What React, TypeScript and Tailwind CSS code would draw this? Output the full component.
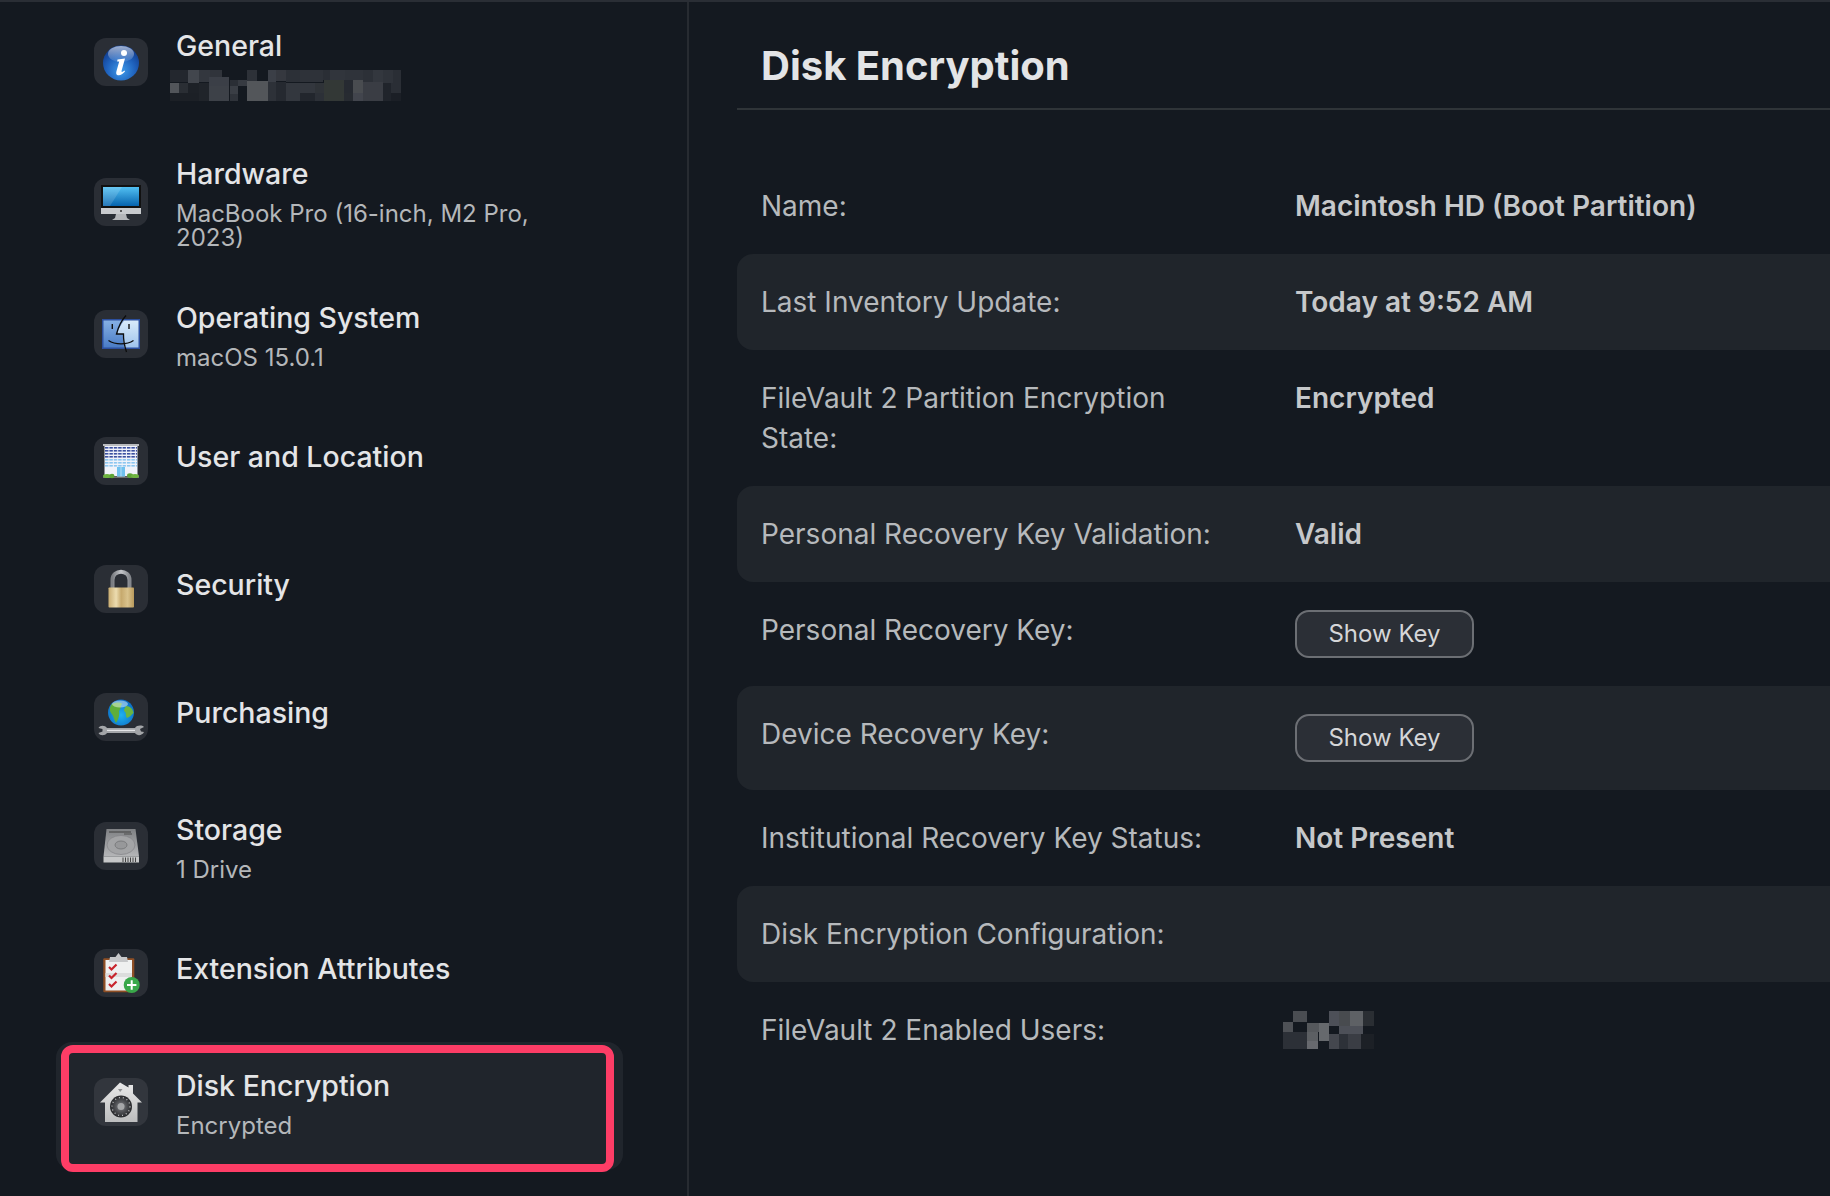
import { ReactNode } from "react";

type Cell = [number, number, number, number, string];

// pixelated redaction blocks, measured off the picture
const generalCells: Cell[] = [
  [5, 8, 18, 12, "#23272e"], [23, 8, 11, 13, "#42464d"], [34, 8, 11, 12, "#33373e"], [45, 8, 12, 7, "#30343b"],
  [44, 15, 20, 9, "#3b3f47"], [65, 18, 8, 6, "#2a2e35"], [73, 18, 9, 6, "#363a41"], [82, 8, 10, 11, "#2d3138"],
  [103, 8, 8, 12, "#3b3f47"], [111, 8, 10, 11, "#35383f"], [121, 8, 14, 12, "#2c3037"], [135, 8, 23, 12, "#2e3239"],
  [158, 8, 7, 10, "#2a2e35"], [165, 8, 15, 10, "#31353c"], [180, 8, 18, 10, "#2f333a"], [198, 8, 10, 12, "#2c3037"],
  [208, 8, 10, 12, "#33373e"], [218, 8, 10, 13, "#2f333a"], [228, 8, 8, 13, "#2a2e35"],
  [5, 21, 9, 10, "#52555a"], [14, 21, 9, 10, "#2a2e34"], [23, 21, 11, 10, "#1d2127"], [34, 21, 10, 18, "#20242a"],
  [44, 24, 20, 15, "#3d4148"], [65, 24, 8, 8, "#3a3e45"], [82, 19, 21, 20, "#53565a"], [103, 20, 8, 19, "#2d3138"],
  [111, 20, 10, 19, "#252930"], [121, 21, 29, 10, "#33373e"], [150, 21, 9, 10, "#2f3338"], [159, 18, 20, 21, "#333836"],
  [179, 18, 9, 13, "#262a31"], [188, 18, 10, 13, "#494c50"], [198, 20, 20, 19, "#3a3d44"], [218, 21, 8, 10, "#20242b"],
  [226, 21, 10, 10, "#2a2e35"], [5, 31, 29, 8, "#1c2026"], [65, 32, 8, 7, "#2f333a"], [121, 31, 14, 8, "#33373e"],
  [135, 31, 15, 8, "#22262d"], [150, 31, 9, 8, "#2c3037"], [179, 31, 9, 8, "#272b31"], [188, 31, 10, 8, "#42454d"],
  [218, 31, 8, 8, "#20242b"], [226, 31, 10, 8, "#1b1f26"],
];

const userCells: Cell[] = [
  [10, 0, 14, 11, "#4a4d52"], [0, 11, 10, 10, "#4e5156"], [24, 12, 12, 9, "#55585c"], [36, 12, 10, 18, "#66696d"],
  [0, 21, 24, 17, "#2c3037"], [24, 21, 11, 9, "#5c5f63"], [24, 30, 11, 8, "#67696e"], [46, 0, 10, 15, "#4d5058"],
  [56, 0, 11, 15, "#484b4f"], [67, 0, 13, 15, "#5e6165"], [80, 0, 11, 15, "#2a2e33"], [56, 15, 24, 8, "#4d5058"],
  [46, 23, 10, 15, "#44474e"], [56, 23, 9, 15, "#2d3138"], [65, 23, 13, 15, "#3a3d44"], [78, 23, 13, 15, "#1c2026"],
];

function Mosaic({ cells, w, h, className }: { cells: Cell[]; w: number; h: number; className: string }) {
  return (
    <svg width={w} height={h} viewBox={`0 0 ${w} ${h}`} shapeRendering="crispEdges" className={className}>
      {cells.map((c, i) => (
        <rect key={i} x={c[0]} y={c[1]} width={c[2]} height={c[3]} fill={c[4]} />
      ))}
    </svg>
  );
}

function Art({ children }: { children: ReactNode }) {
  return (
    <svg width="54" height="48" viewBox="0 0 54 48" className="block">
      {children}
    </svg>
  );
}

const InfoIcon = (
  <Art>
    <defs>
      <radialGradient id="infoBlue" cx="50%" cy="72%" r="65%">
        <stop offset="0%" stopColor="#3f9bea" />
        <stop offset="60%" stopColor="#1f62bd" />
        <stop offset="100%" stopColor="#123f91" />
      </radialGradient>
      <linearGradient id="infoGloss" x1="0" y1="0" x2="0" y2="1">
        <stop offset="0%" stopColor="#ffffff" stopOpacity="0.6" />
        <stop offset="100%" stopColor="#ffffff" stopOpacity="0.08" />
      </linearGradient>
    </defs>
    <ellipse cx="27" cy="25" rx="18" ry="17.5" fill="url(#infoBlue)" />
    <ellipse cx="27" cy="16" rx="13" ry="8" fill="url(#infoGloss)" />
    <circle cx="30" cy="15" r="3" fill="#fff" />
    <path d="M23.5 21.5 L31 20.5 L27.5 33 C27.3 34.4 28.6 34.2 30.5 32.6 L31 33.6 C28.6 36.4 26 37.8 23.8 37.2 C22 36.6 22 35 22.4 33.4 L25.2 23.6 L23.2 23.4 Z" fill="#fff" />
  </Art>
);

const MonitorIcon = (
  <Art>
    <defs>
      <linearGradient id="monScreen" x1="0" y1="0" x2="0" y2="1">
        <stop offset="0%" stopColor="#52c0f2" />
        <stop offset="100%" stopColor="#0563ae" />
      </linearGradient>
    </defs>
    <rect x="7" y="7" width="40" height="23" fill="#111" />
    <rect x="9" y="9" width="36" height="19" fill="url(#monScreen)" />
    <path d="M9 9 H28 L16 28 H9 Z" fill="#fff" opacity="0.14" />
    <rect x="7" y="30" width="40" height="6" fill="#c9cbce" />
    <circle cx="27" cy="33" r="1" fill="#333" />
    <path d="M22 36 H32 L33 40 L36 42 H18 L21 40 Z" fill="#b4b6b9" />
  </Art>
);

const FinderIcon = (
  <Art>
    <defs>
      <linearGradient id="findL" x1="0" y1="0" x2="0" y2="1">
        <stop offset="0%" stopColor="#86b0e4" />
        <stop offset="100%" stopColor="#4a7cc6" />
      </linearGradient>
      <linearGradient id="findR" x1="0" y1="0" x2="0" y2="1">
        <stop offset="0%" stopColor="#d9ebfa" />
        <stop offset="100%" stopColor="#9fc3ec" />
      </linearGradient>
    </defs>
    <rect x="8" y="9" width="38" height="30" fill="#2c4f9e" />
    <path d="M9.5 10.5 H30 C26 16 24 20 23 24 H29 C29 29 29.5 33 30 37.5 H9.5 Z" fill="url(#findL)" />
    <path d="M30 10.5 H44.5 V37.5 H30 C29.5 33 29 29 29 24 H23 C24 20 26 16 30 10.5 Z" fill="url(#findR)" />
    <path d="M32 5.5 C27 11 24 18 22.5 24 H29.5 C29.3 30 30.5 36 32.5 42" fill="none" stroke="#0c0c0c" strokeWidth="1.3" />
    <path d="M14.5 30.5 C21 35 33 35 39.5 30.5" fill="none" stroke="#0c0c0c" strokeWidth="1.3" />
    <path d="M18.3 14 V19 M35 14 V19" stroke="#111" strokeWidth="1.4" />
  </Art>
);

const BuildingIcon = (
  <Art>
    <defs>
      <pattern id="bldgWin" x="11" y="10" width="4.4" height="3" patternUnits="userSpaceOnUse">
        <rect width="3.4" height="1.6" fill="#3b50a0" />
      </pattern>
      <pattern id="bldgWin2" x="11" y="22" width="4.4" height="3" patternUnits="userSpaceOnUse">
        <rect width="3.4" height="1.6" fill="#8cc6f0" />
      </pattern>
    </defs>
    <rect x="10.5" y="9" width="33" height="30" fill="#f1f3fa" />
    <rect x="9" y="7" width="36" height="2" fill="#b9bbbe" />
    <rect x="11" y="10" width="32" height="12" fill="url(#bldgWin)" />
    <rect x="11" y="22" width="32" height="9" fill="url(#bldgWin2)" />
    <rect x="23" y="30" width="8" height="10" fill="#70c1ee" />
    <rect x="26.7" y="30" width="0.6" height="10" fill="#e8f4fb" />
    <rect x="9" y="39.5" width="36" height="1.2" fill="#8d8f8c" />
    <ellipse cx="13" cy="39" rx="4" ry="2" fill="#6db33f" />
    <ellipse cx="18" cy="39" rx="2.5" ry="2.2" fill="#5ea436" />
    <ellipse cx="36" cy="38.6" rx="3" ry="2.4" fill="#5ea436" />
    <ellipse cx="41" cy="39" rx="4" ry="2" fill="#6db33f" />
  </Art>
);

const LockIcon = (
  <Art>
    <defs>
      <linearGradient id="lockBody" x1="0" y1="0" x2="1" y2="0">
        <stop offset="0%" stopColor="#c9ad72" />
        <stop offset="30%" stopColor="#ecdcb0" />
        <stop offset="50%" stopColor="#c6a96d" />
        <stop offset="75%" stopColor="#d9c28c" />
        <stop offset="100%" stopColor="#b99a5c" />
      </linearGradient>
      <linearGradient id="lockBar" x1="0" y1="0" x2="1" y2="0">
        <stop offset="0%" stopColor="#7a7d82" />
        <stop offset="50%" stopColor="#c4c6ca" />
        <stop offset="100%" stopColor="#85888d" />
      </linearGradient>
    </defs>
    <path d="M18.5 23 V15 C18.5 4 35.5 4 35.5 15 V23" fill="none" stroke="url(#lockBar)" strokeWidth="4" />
    <rect x="14.5" y="22.5" width="25.5" height="20" rx="0.8" fill="url(#lockBody)" />
  </Art>
);

const GlobeIcon = (
  <Art>
    <defs>
      <radialGradient id="globeSea" cx="50%" cy="60%" r="60%">
        <stop offset="0%" stopColor="#1fb2f0" />
        <stop offset="100%" stopColor="#0b6cc4" />
      </radialGradient>
    </defs>
    <circle cx="27" cy="19.5" r="13" fill="url(#globeSea)" />
    <path d="M18 11 C22 9 27 9 28 11 C26 14 27 16 25 18 C26 22 24 27 22 30 C20 27 20 23 17 20 C15 17 16 13 18 11 Z" fill="#5fae3a" />
    <path d="M32 13 C36 13 39 16 39.5 20 C37 22 36 24 33 25 C31 22 33 20 30 18 C30 16 31 14 32 13 Z" fill="#6bb540" />
    <ellipse cx="26" cy="11" rx="8" ry="3.5" fill="#fff" opacity="0.45" />
    <path d="M4.5 35 C6 32 11 32 13 35 H41 C43 32 48 32 50 34 L46 36 L47 38.5 L50 39 C48 43 43 43 41 40 H13 C11 43 6 43 4.5 40 L8.5 38.5 L8.5 36 Z" fill="#a4a6a9" />
    <rect x="13" y="36.8" width="28" height="1.2" fill="#e4e5e7" />
  </Art>
);

const DiskIcon = (
  <Art>
    <defs>
      <linearGradient id="diskTop" x1="0" y1="0" x2="0" y2="1">
        <stop offset="0%" stopColor="#7f8184" />
        <stop offset="100%" stopColor="#b5b6b8" />
      </linearGradient>
    </defs>
    <path d="M12.5 7 H41.5 L45 34.5 H9.5 Z" fill="url(#diskTop)" />
    <rect x="15" y="9.5" width="22" height="1" fill="#3f3f3f" />
    <rect x="30" y="11.5" width="8" height="1" fill="#4c4c4c" />
    <ellipse cx="27" cy="23" rx="14" ry="9.5" fill="#a3a4a6" stroke="#828386" strokeWidth="0.7" />
    <ellipse cx="27" cy="23" rx="6" ry="4" fill="#97989a" stroke="#6c6d6f" strokeWidth="0.7" />
    <rect x="9.5" y="34.5" width="35.5" height="6" fill="#c6c7c8" />
    <path d="M29 35.5 V40 M31.5 35.5 V40 M34 35.5 V40 M36.5 35.5 V40 M39 35.5 V40 M41.5 35.5 V40" stroke="#444" strokeWidth="1" />
  </Art>
);

const ClipboardIcon = (
  <Art>
    <rect x="9.3" y="9.3" width="31" height="34" rx="1" fill="#8f4f25" />
    <rect x="11.5" y="11" width="26.5" height="30.5" fill="#eff0f0" />
    <rect x="11.5" y="24" width="26.5" height="4" fill="#dcdddd" />
    <path d="M24.5 4 L27.5 8 H33 L34 13 H15 L16 8 H21.5 Z" fill="#c7c8ca" />
    <path d="M15 18 L17.5 20.5 L22.5 15.5 M15 26.5 L17.5 29 L22.5 24 M15 35 L17.5 37.5 L22.5 32.5" fill="none" stroke="#c8242c" strokeWidth="2.2" />
    <circle cx="37.7" cy="36" r="8" fill="#39a84a" />
    <path d="M37.7 31.3 V40.7 M33 36 H42.4" stroke="#fff" strokeWidth="2" />
  </Art>
);

const VaultIcon = (
  <Art>
    <defs>
      <linearGradient id="vaultBody" x1="0" y1="0" x2="0" y2="1">
        <stop offset="0%" stopColor="#e9e9e9" />
        <stop offset="100%" stopColor="#bcbdbe" />
      </linearGradient>
      <radialGradient id="vaultDial" cx="50%" cy="50%" r="50%">
        <stop offset="0%" stopColor="#8e8f91" />
        <stop offset="45%" stopColor="#55565a" />
        <stop offset="100%" stopColor="#26272a" />
      </radialGradient>
    </defs>
    <path d="M34.5 9.5 V7 H39 V15.5 L48 24.5 H43.5 V44 H11 V24.5 H6 L26 4.5 Z" fill="url(#vaultBody)" />
    <path d="M24 11 H28.5 L26.2 14 Z" fill="#8f9092" />
    <circle cx="27" cy="28.5" r="11" fill="url(#vaultDial)" />
    <circle cx="27" cy="28.5" r="9" fill="none" stroke="#cfd0d2" strokeWidth="1.2" strokeDasharray="1 3" />
    <circle cx="27" cy="28.5" r="3.5" fill="#a6a7a9" />
  </Art>
);

const navItems = [
  { title: "General", blurred: true, rowClass: "h-[140px]", icon: InfoIcon },
  { title: "Hardware", sub: "MacBook Pro (16-inch, M2 Pro, 2023)", rowClass: "h-[132px]", icon: MonitorIcon },
  { title: "Operating System", sub: "macOS 15.0.1", rowClass: "h-[127px]", icon: FinderIcon },
  { title: "User and Location", rowClass: "h-[128px]", icon: BuildingIcon },
  { title: "Security", rowClass: "h-[128px]", icon: LockIcon },
  { title: "Purchasing", rowClass: "h-[129px]", icon: GlobeIcon },
  { title: "Storage", sub: "1 Drive", rowClass: "h-[127px]", icon: DiskIcon },
  { title: "Extension Attributes", rowClass: "h-[129px]", icon: ClipboardIcon },
  { title: "Disk Encryption", sub: "Encrypted", rowClass: "h-[128px]", icon: VaultIcon, selected: true },
];

function NavRow({ item }: { item: (typeof navItems)[number] }) {
  return (
    <div className={`relative w-[567px] rounded-2xl ${item.rowClass} ${item.selected ? "bg-[#20252c]" : ""}`}>
      <div className="flex h-[120px] items-center pl-[38px]">
        <div className={`h-12 w-[54px] shrink-0 rounded-[12px] ${item.selected ? "bg-[#32363d]" : "bg-[#2a2e35]"}`}>
          {item.icon}
        </div>
        <div className="ml-[28px] w-[400px]">
          <div className="text-[28.5px] leading-10 font-medium text-[#e4e5e7]">{item.title}</div>
          {item.sub && <div className="mt-2 w-[380px] text-[24px] leading-6 text-[#b4b7ba]">{item.sub}</div>}
          {item.blurred && (
            <div className="mt-2 h-6">
              <Mosaic cells={generalCells} w={245} h={40} className="-translate-x-[11px] -translate-y-3" />
            </div>
          )}
          {!item.sub && !item.blurred && <div className="h-2" />}
        </div>
      </div>
      {item.selected && (
        <div className="absolute top-[3px] right-[9px] bottom-[-2px] left-[5px] rounded-[12px] border-8 border-[#fd3d66]" />
      )}
    </div>
  );
}

function Field({ label, value, shaded, children }: { label: string; value?: string; shaded?: boolean; children?: ReactNode }) {
  return (
    <div className={`flex rounded-l-2xl px-6 py-7 text-[28px] leading-10 ${shaded ? "bg-[#20252b]" : ""}`}>
      <div className="w-[534px] shrink-0 pr-16 text-[#b6b9bc]">{label}</div>
      {value && <div className="font-semibold text-[#c6c8ca]">{value}</div>}
      {children}
    </div>
  );
}

function ShowKey() {
  return (
    <button className="h-12 w-[179px] rounded-[14px] border-2 border-[#6c6f74] bg-[#2b2f36] text-[24px] text-[#d5d6d8]">
      Show Key
    </button>
  );
}

export default function App() {
  return (
    <div className="flex h-[1196px] w-full overflow-hidden border-t-2 border-[#2a2e35] bg-[#141920] font-['Inter',sans-serif]">
      <aside className="w-[689px] shrink-0 border-r-2 border-[#272b31] pl-14">
        {navItems.map((item) => (
          <NavRow key={item.title} item={item} />
        ))}
      </aside>
      <main className="min-w-0 flex-1 pl-[48px]">
        <div className="box-content h-[106px] border-b-2 border-[#2f3438]">
          <h1 className="pt-[40px] pl-6 text-[40px] leading-[48px] font-bold text-[#e3e4e6]">Disk Encryption</h1>
        </div>
        <div className="mt-[48px]">
          <Field label="Name:" value="Macintosh HD (Boot Partition)" />
          <Field label="Last Inventory Update:" value="Today at 9:52 AM" shaded />
          <Field label="FileVault 2 Partition Encryption State:" value="Encrypted" />
          <Field label="Personal Recovery Key Validation:" value="Valid" shaded />
          <Field label="Personal Recovery Key:">
            <ShowKey />
          </Field>
          <Field label="Device Recovery Key:" shaded>
            <ShowKey />
          </Field>
          <Field label="Institutional Recovery Key Status:" value="Not Present" />
          <Field label="Disk Encryption Configuration:" shaded />
          <Field label="FileVault 2 Enabled Users:">
            <Mosaic cells={userCells} w={91} h={38} className="-ml-3 translate-y-[1px]" />
          </Field>
        </div>
      </main>
    </div>
  );
}
